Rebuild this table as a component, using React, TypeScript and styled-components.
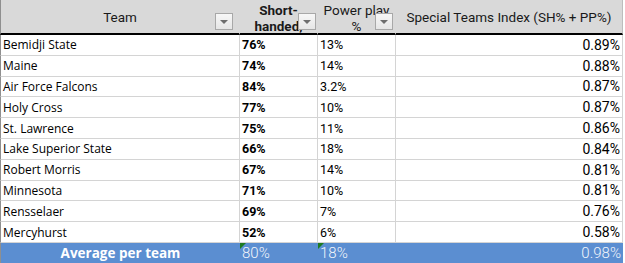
import React from 'react';
import styled, { createGlobalStyle } from 'styled-components';

const GlobalStyle = createGlobalStyle`
  html, body {
    margin: 0;
    padding: 0;
    background: #ffffff;
  }
`;

type Row = { team: string; sh: string; pp: string; index: string };

const rows: Row[] = [
  { team: 'Bemidji State', sh: '76%', pp: '13%', index: '0.89%' },
  { team: 'Maine', sh: '74%', pp: '14%', index: '0.88%' },
  { team: 'Air Force Falcons', sh: '84%', pp: '3.2%', index: '0.87%' },
  { team: 'Holy Cross', sh: '77%', pp: '10%', index: '0.87%' },
  { team: 'St. Lawrence', sh: '75%', pp: '11%', index: '0.86%' },
  { team: 'Lake Superior State', sh: '66%', pp: '18%', index: '0.84%' },
  { team: 'Robert Morris', sh: '67%', pp: '14%', index: '0.81%' },
  { team: 'Minnesota', sh: '71%', pp: '10%', index: '0.81%' },
  { team: 'Rensselaer', sh: '69%', pp: '7%', index: '0.76%' },
  { team: 'Mercyhurst', sh: '52%', pp: '6%', index: '0.58%' },
];

const TEXT_FONT = `"Open Sans", "Noto Sans", sans-serif`;
const NUM_FONT = `Roboto, "Liberation Sans", sans-serif`;

const Sheet = styled.div`
  display: grid;
  grid-template-columns: 240px 78px 78px 227px;
  grid-template-rows: 35px repeat(10, 20.8px) 20px;
  width: 623px;
  color: #000;
`;

const HeaderCell = styled.div<{ $last?: boolean; $first?: boolean }>`
  position: relative;
  box-sizing: border-box;
  background: #d9d9d9;
  border-bottom: 2px solid #000;
  border-right: 1px solid ${p => (p.$last ? '#bdbdbd' : '#d9d9d9')};
  border-left: ${p => (p.$first ? '1px solid #8f8f8f' : 'none')};
  overflow: hidden;
  font-family: ${NUM_FONT};
  font-size: 13.5px;
  color: #1a1a1a;
  display: flex;
  justify-content: center;
  align-items: center;
`;

const StackedTitle = styled.div<{ $bold?: boolean }>`
  align-self: flex-start;
  padding-top: 2px;
  line-height: 16px;
  text-align: center;
  font-weight: ${p => (p.$bold ? 700 : 400)};
  white-space: nowrap;
`;

const Filter = styled.div<{ $right: number }>`
  position: absolute;
  top: 13px;
  right: ${p => p.$right}px;
  width: 18px;
  height: 17px;
  box-sizing: border-box;
  border: 1px solid #a8a8a8;
  background: linear-gradient(#f7f7f7, #e6e6e6);
  display: flex;
  align-items: center;
  justify-content: center;

  &::after {
    content: '';
    width: 0;
    height: 0;
    border-left: 4px solid transparent;
    border-right: 4px solid transparent;
    border-top: 4px solid #6e6e6e;
  }
`;

const Cell = styled.div<{ $align?: 'left' | 'right'; $bold?: boolean; $text?: boolean; $first?: boolean }>`
  box-sizing: border-box;
  border-right: 1px solid #d4d4d4;
  border-bottom: 1px solid #d4d4d4;
  border-left: ${p => (p.$first ? '1px solid #8f8f8f' : 'none')};
  padding: 0 2px 0 2px;
  display: flex;
  align-items: center;
  justify-content: ${p => (p.$align === 'right' ? 'flex-end' : 'flex-start')};
  font-family: ${p => (p.$text ? TEXT_FONT : NUM_FONT)};
  font-size: ${p => (p.$text ? '12px' : '12.5px')};
  font-weight: ${p => (p.$bold ? 700 : 400)};
  white-space: nowrap;
  overflow: hidden;
`;

const IndexCell = styled(Cell)`
  font-size: 14px;
`;

const TotalCell = styled.div<{ $align?: 'left' | 'center' | 'right'; $flag?: boolean; $first?: boolean }>`
  position: relative;
  box-sizing: border-box;
  background: #5b8ed1;
  color: #f2f5fb;
  border-left: ${p => (p.$first ? '1px solid #8f8f8f' : 'none')};
  padding: 0 2px;
  display: flex;
  align-items: center;
  justify-content: ${p =>
    p.$align === 'right' ? 'flex-end' : p.$align === 'center' ? 'center' : 'flex-start'};
  font-family: ${NUM_FONT};
  font-size: 15px;
  font-weight: 300;
  white-space: nowrap;

  &::before {
    content: '';
    display: ${p => (p.$flag ? 'block' : 'none')};
    position: absolute;
    top: 0;
    left: 0;
    width: 0;
    height: 0;
    border-top: 6px solid #1d7a21;
    border-right: 6px solid transparent;
  }
`;

const TotalLabel = styled(TotalCell)`
  font-family: ${TEXT_FONT};
  font-size: 13.5px;
  font-weight: 700;
  color: #ffffff;
`;

export default function App() {
  return (
    <>
      <GlobalStyle />
      <Sheet>
        <HeaderCell $first>
          Team
          <Filter $right={6} />
        </HeaderCell>
        <HeaderCell>
          <StackedTitle $bold>
            Short-
            <br />
            handed,
          </StackedTitle>
          <Filter $right={1} />
        </HeaderCell>
        <HeaderCell>
          <StackedTitle>
            Power play
            <br />%
          </StackedTitle>
          <Filter $right={2} />
        </HeaderCell>
        <HeaderCell $last>Special Teams Index (SH% + PP%)</HeaderCell>

        {rows.map(r => (
          <React.Fragment key={r.team}>
            <Cell $text $first>
              {r.team}
            </Cell>
            <Cell $bold>{r.sh}</Cell>
            <Cell>{r.pp}</Cell>
            <IndexCell $align="right">{r.index}</IndexCell>
          </React.Fragment>
        ))}

        <TotalLabel $align="center" $first>
          Average per team
        </TotalLabel>
        <TotalCell $flag>80%</TotalCell>
        <TotalCell $flag>18%</TotalCell>
        <TotalCell $align="right">0.98%</TotalCell>
      </Sheet>
    </>
  );
}
